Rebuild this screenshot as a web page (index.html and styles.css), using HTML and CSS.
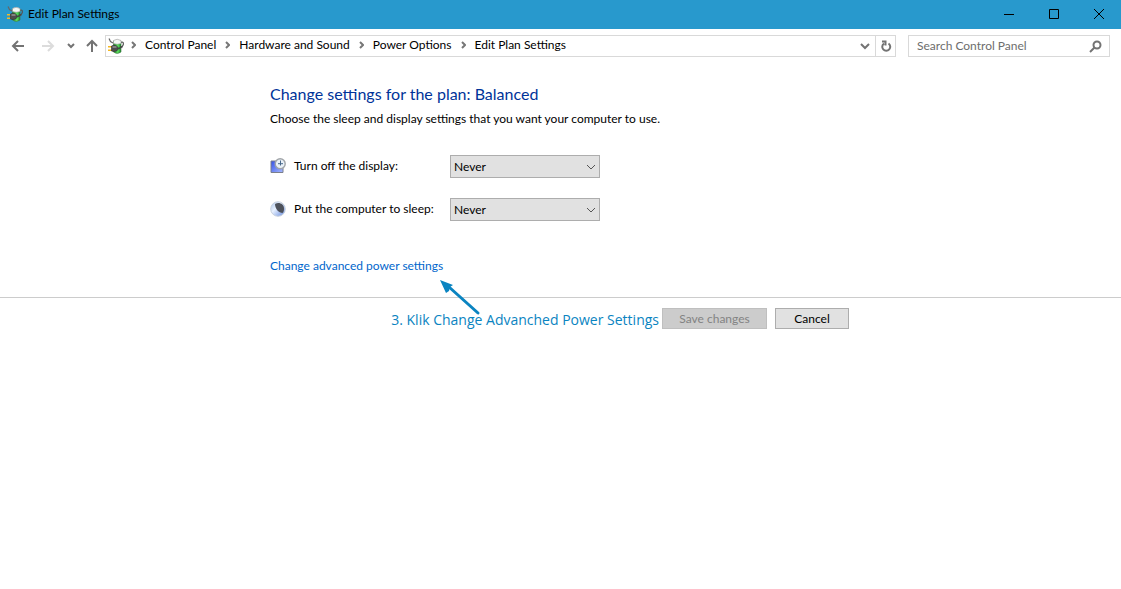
FILE: index.html
```
<!DOCTYPE html>
<html lang="en">
<head>
<meta charset="UTF-8">
<meta name="viewport" content="width=device-width, initial-scale=1.0">
<title>Edit Plan Settings</title>
<link rel="stylesheet" href="styles.css">
</head>
<body>
  <!-- battery with plug, used in the title bar and the address bar -->
  <svg class="defs" width="0" height="0" aria-hidden="true">
    <defs>
      <linearGradient id="green" x1="0" x2="1">
        <stop offset="0" stop-color="#2f9b2f"/>
        <stop offset=".6" stop-color="#5fe060"/>
        <stop offset="1" stop-color="#168a25"/>
      </linearGradient>
      <symbol id="power" viewBox="0 0 16 16">
        <path d="M1 .5l1.500 3L5 5" stroke="#666" stroke-width="1.200" fill="none"/>
        <path d="M13 4.500c2-1 2.600 0 2.300 2L13.500 10" stroke="#555" stroke-width="1.200" fill="none"/>
        <path d="M5.500 3h7.500v11q-3.700 3-7.500 0z" fill="url(#green)" stroke="#3f7045" stroke-width=".6"/>
        <path d="M5.500 5.500V2.500Q9 0 13 2.500v3Q9 7 5.500 5.500z" fill="#f4f7f4" stroke="#999" stroke-width=".6"/>
        <path d="M0 8.700h4M0 12.300h4" stroke="#f5b820" stroke-width="1.500"/>
        <path d="M3.500 8l2-.8c3 0 4.500 1.300 4.500 3.300s-1.500 3-4.500 3l-2-.5z" fill="#4d4d4d" stroke="#2b2b2b" stroke-width=".6"/>
        <path d="M4.500 9h4" stroke="#b5b5b5"/>
        <path d="M10 10.500c2.500 0 3-1 3.500-2.500" stroke="#444" stroke-width="1.400" fill="none"/>
      </symbol>
    </defs>
  </svg>

  <header class="titlebar">
    <svg class="icon" aria-hidden="true"><use href="#power"/></svg>
    <span class="title">Edit Plan Settings</span>
    <button class="window-btn" aria-label="Minimize">
      <svg width="12" height="12"><path d="M1 6.500h10"/></svg>
    </button>
    <button class="window-btn" aria-label="Maximize">
      <svg width="12" height="12"><path d="M1.500 1.500h9v9h-9z"/></svg>
    </button>
    <button class="window-btn" aria-label="Close">
      <svg width="12" height="12"><path d="M1 1l10 10M11 1L1 11"/></svg>
    </button>
  </header>

  <nav class="navbar">
    <button class="nav-btn" aria-label="Back">
      <svg width="14" height="14"><path d="M13 7H2M7 2L2 7l5 5"/></svg>
    </button>
    <button class="nav-btn forward" aria-label="Forward" disabled>
      <svg width="14" height="14"><path d="M1 7h11M7 2l5 5-5 5"/></svg>
    </button>
    <button class="nav-btn recent" aria-label="Recent locations">
      <svg width="8" height="14"><path d="M1 5l3 3 3-3"/></svg>
    </button>
    <button class="nav-btn up" aria-label="Up">
      <svg width="14" height="14"><path d="M7 13V2M2 7l5-5 5 5"/></svg>
    </button>
    <div class="address">
      <svg class="icon" aria-hidden="true"><use href="#power"/></svg>
      <ol class="breadcrumb">
        <li><svg width="5" height="8"><path d="M1 1l3 3-3 3"/></svg><a href="#">Control Panel</a></li>
        <li><svg width="5" height="8"><path d="M1 1l3 3-3 3"/></svg><a href="#">Hardware and Sound</a></li>
        <li><svg width="5" height="8"><path d="M1 1l3 3-3 3"/></svg><a href="#">Power Options</a></li>
        <li><svg width="5" height="8"><path d="M1 1l3 3-3 3"/></svg><a href="#">Edit Plan Settings</a></li>
      </ol>
      <button class="address-btn" aria-label="Previous locations">
        <svg width="10" height="8"><path d="M1 2l4 4 4-4"/></svg>
      </button>
      <button class="address-btn refresh" aria-label="Refresh">
        <svg width="12" height="12"><path d="M8.500 3.500A4 4 0 1 1 4 3.500M2 1.500h3.500v4"/></svg>
      </button>
    </div>
    <div class="search">
      <input type="search" placeholder="Search Control Panel" aria-label="Search Control Panel">
      <svg width="13" height="13" aria-hidden="true"><circle cx="8" cy="5" r="3.500"/><path d="M5.500 7.500L1 12"/></svg>
    </div>
  </nav>

  <main>
    <div class="content">
      <h1>Change settings for the plan: Balanced</h1>
      <p>Choose the sleep and display settings that you want your computer to use.</p>

      <div class="setting">
        <svg class="icon" viewBox="0 0 16 16" aria-hidden="true">
          <defs>
            <linearGradient id="screen" x1="0" x2="1" y2="1">
              <stop offset="0" stop-color="#3350e6"/>
              <stop offset="1" stop-color="#a9bcff"/>
            </linearGradient>
          </defs>
          <path d="M1 3h12v11.500H1z" fill="url(#screen)" stroke="#7b7f8c"/>
          <circle cx="10.200" cy="5.700" r="5" fill="#e9f1f8" stroke="#a0a4a8" stroke-width="1.400"/>
          <path d="M10.500 2.500v5M8 5.700h5" stroke="#48688a" fill="none"/>
        </svg>
        <label for="display">Turn off the display:</label>
        <div class="dropdown">
          <select id="display"><option>Never</option></select>
          <svg width="10" height="6" aria-hidden="true"><path d="M1 1l4 4 4-4"/></svg>
        </div>
      </div>

      <div class="setting">
        <svg class="icon" viewBox="0 0 16 16" aria-hidden="true">
          <defs>
            <linearGradient id="moon" x1="0" x2="1" y2="1">
              <stop offset="0" stop-color="#a9c3e8"/>
              <stop offset=".4" stop-color="#e8f1ff"/>
              <stop offset="1" stop-color="#5f86dd"/>
            </linearGradient>
          </defs>
          <circle cx="8" cy="8" r="7.300" fill="url(#moon)" stroke="#c9d2de"/>
          <path d="M5 3c4-2.500 9 0 9 4.500 0 2-.5 3.500-1.500 4.500C9 12 5 8 5 3z" fill="#4e525b"/>
        </svg>
        <label for="sleep">Put the computer to sleep:</label>
        <div class="dropdown">
          <select id="sleep"><option>Never</option></select>
          <svg width="10" height="6" aria-hidden="true"><path d="M1 1l4 4 4-4"/></svg>
        </div>
      </div>

      <a class="advanced" href="#">Change advanced power settings</a>
    </div>
  </main>

  <footer>
    <div class="actions">
      <div class="note">
        3. Klik Change Advanched Power Settings
        <svg class="arrow" width="42" height="38" aria-hidden="true">
          <path d="M39 34L10 8" stroke="#0a84c1" stroke-width="3" stroke-linecap="round"/>
          <path d="M1 1l13 5-3 2-1 4-3 2z" fill="#0a84c1"/>
        </svg>
      </div>
      <button class="save" disabled>Save changes</button>
      <button class="cancel">Cancel</button>
    </div>
  </footer>
</body>
</html>
```
FILE: styles.css
```
* {
  box-sizing: border-box;
}

body {
  margin: 0;
  background: #fff;
  color: #000;
  font: 12px/16px Lato, "Open Sans", sans-serif;
}

button, input, select {
  font: inherit;
}

svg {
  flex: none;
  fill: none;
}

.defs {
  position: absolute;
}

.icon {
  width: 16px;
  height: 16px;
}

/* title bar */
.titlebar {
  display: flex;
  align-items: center;
  height: 29px;
  padding: 0 0 2px 7px;
  background: #2899cd;
}

.title {
  flex: 1;
  margin-left: 5px;
}

.window-btn {
  display: flex;
  align-items: center;
  justify-content: center;
  width: 45px;
  height: 27px;
  padding: 0;
  border: none;
  background: none;
}

.window-btn svg {
  stroke: #000;
}

/* navigation */
.navbar {
  display: flex;
  align-items: center;
  padding: 6px 11px 0;
}

.nav-btn {
  display: flex;
  margin-right: 16px;
  padding: 0;
  border: none;
  background: none;
}

.nav-btn svg {
  stroke: #737373;
  stroke-width: 2;
}

.forward {
  margin-right: 12px;
}

.forward svg {
  stroke: #dcdcdc;
}

.recent {
  margin-right: 10px;
}

.up {
  margin-right: 6px;
}

.address {
  display: flex;
  flex: 1;
  align-items: center;
  height: 22px;
  padding-left: 2px;
  border: 1px solid #d9d9d9;
}

.breadcrumb {
  display: flex;
  flex: 1;
  margin: 0;
  padding: 0 0 2px 7px;
  list-style: none;
}

.breadcrumb li {
  display: flex;
  align-items: center;
  margin-right: 9px;
}

.breadcrumb svg {
  margin-right: 9px;
  stroke: #777;
  stroke-width: 2;
}

.breadcrumb a {
  color: #000;
  text-decoration: none;
}

.address-btn {
  display: flex;
  align-items: center;
  justify-content: center;
  width: 20px;
  height: 20px;
  padding: 0;
  border: none;
  background: none;
}

.address-btn svg {
  stroke: #737373;
  stroke-width: 2;
}

.refresh {
  border-left: 1px solid #d9d9d9;
}

.search {
  display: flex;
  align-items: center;
  width: 202px;
  height: 22px;
  margin-left: 12px;
  padding: 0 7px 0 8px;
  border: 1px solid #d9d9d9;
}

.search input {
  flex: 1;
  min-width: 0;
  padding: 0;
  border: none;
  outline: none;
  background: none;
}

.search input::placeholder {
  color: #6d6d6d;
}

.search svg {
  stroke: #737373;
  stroke-width: 2;
}

/* plan settings */
.content, .actions {
  max-width: 581px;
  margin: 0 auto;
}

main {
  padding: 26px 0 23px;
}

h1 {
  margin: 0;
  color: #003399;
  font-size: 16px;
  font-weight: normal;
  line-height: 22px;
}

p {
  margin: 6px 0 28px;
}

.setting {
  display: flex;
  align-items: center;
  margin-bottom: 20px;
}

.setting .icon {
  margin-bottom: 2px;
}

.setting label {
  width: 156px;
  margin-left: 8px;
  padding-bottom: 2px;
}

.dropdown {
  display: grid;
  align-items: center;
  width: 150px;
}

.dropdown select, .dropdown svg {
  grid-area: 1 / 1;
}

.dropdown select {
  appearance: none;
  width: 100%;
  height: 23px;
  padding: 0 3px;
  border: 1px solid #adadad;
  border-radius: 0;
  background: #e1e1e1;
  color: #000;
}

.dropdown svg {
  justify-self: end;
  margin-right: 4px;
  stroke: #555;
  pointer-events: none;
}

.advanced {
  display: inline-block;
  margin-top: 17px;
  color: #0066cc;
  text-decoration: none;
}

/* bottom row */
footer {
  border-top: 1px solid #ccc;
}

.actions {
  display: flex;
  align-items: center;
  justify-content: flex-end;
  padding: 10px 2px 0 0;
}

.note {
  position: relative;
  margin-right: 3px;
  padding-top: 2px;
  color: #0a84c1;
  font-family: "Open Sans", sans-serif;
  font-size: 14px;
  white-space: nowrap;
}

.arrow {
  position: absolute;
  left: 48px;
  bottom: 11px;
}

.save, .cancel {
  height: 21px;
  padding: 0;
  border: 1px solid #adadad;
  background: #e1e1e1;
  color: #000;
}

.save {
  width: 105px;
  margin-right: 8px;
  border-color: #bfbfbf;
  background: #ccc;
  color: #838383;
}

.cancel {
  width: 74px;
}
```
